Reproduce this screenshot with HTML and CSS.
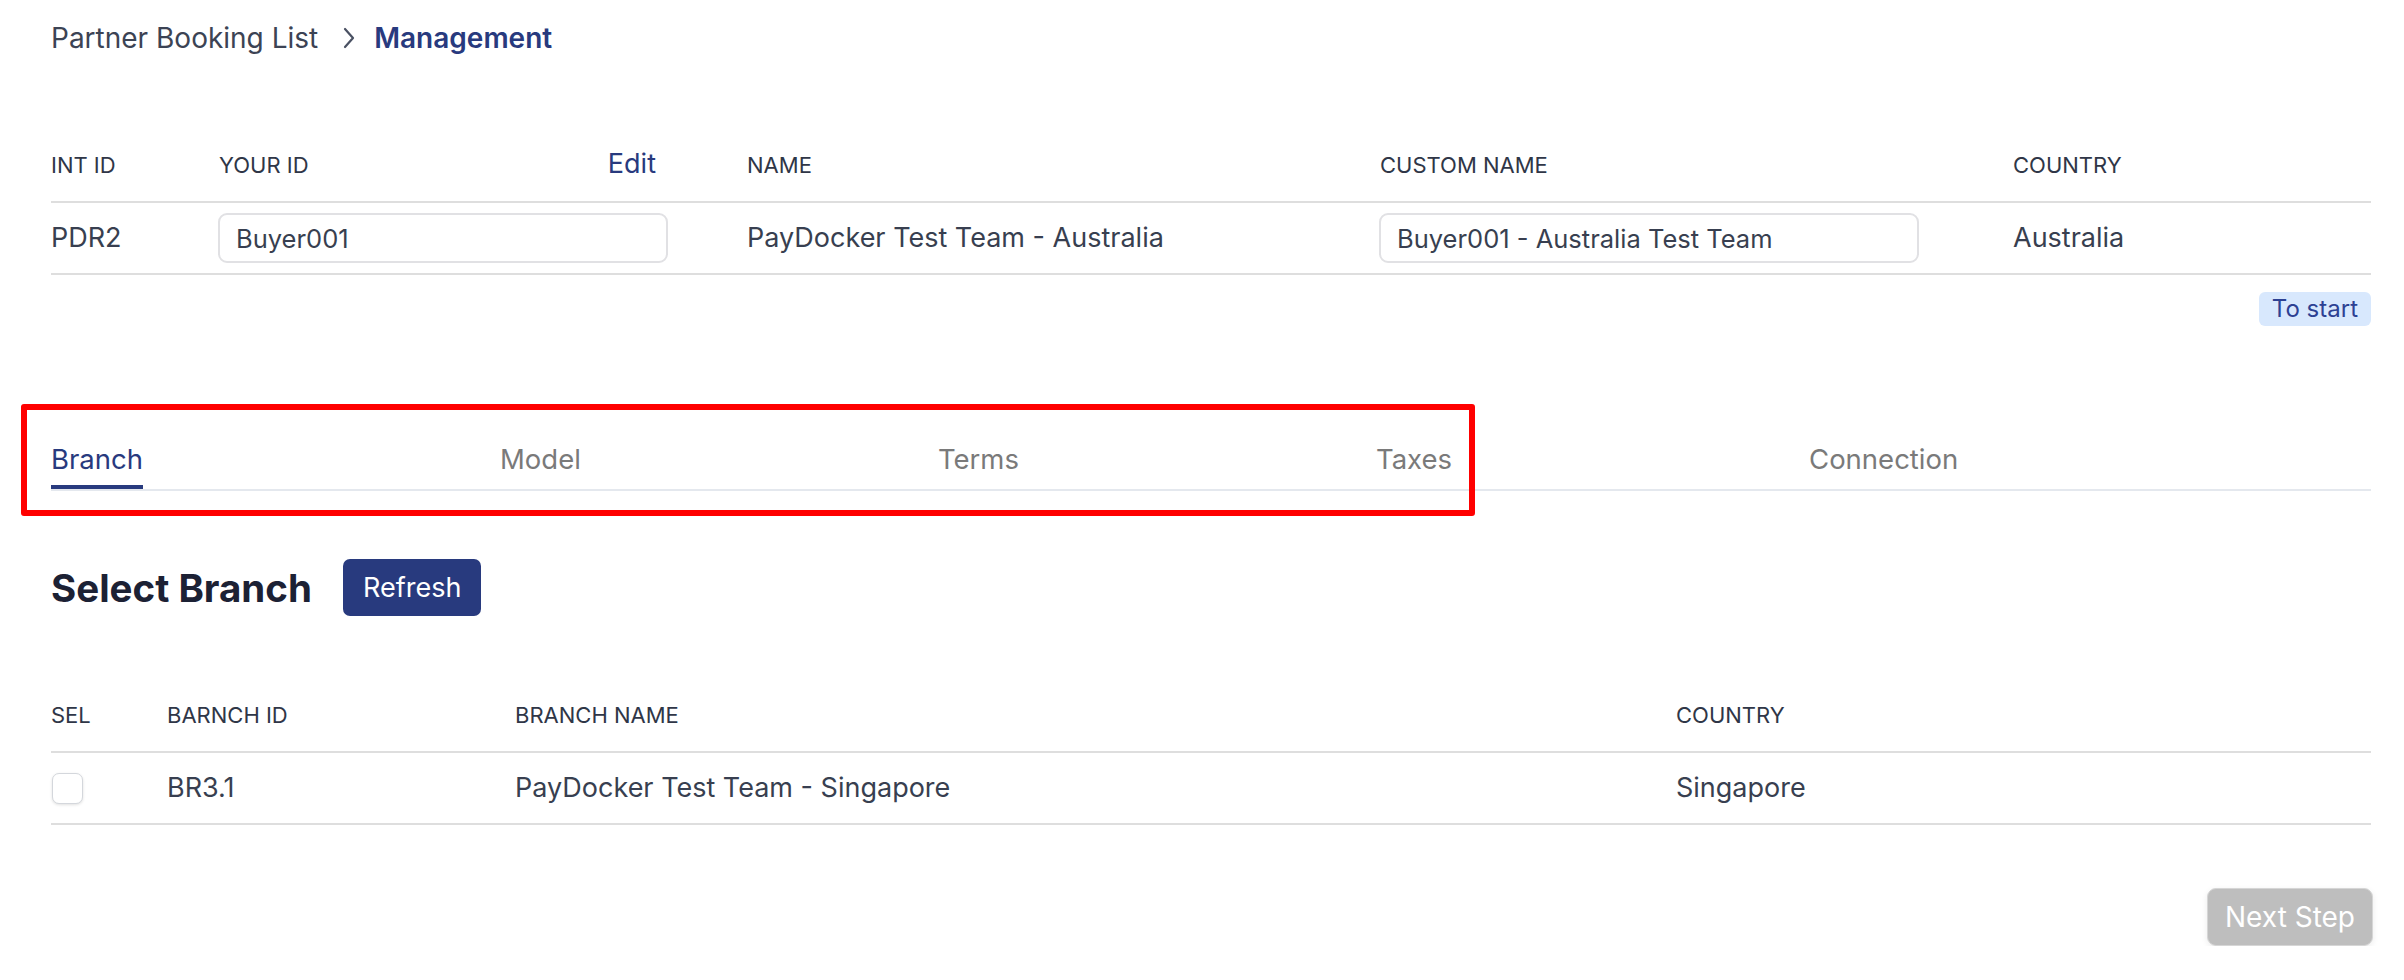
FILE: index.html
```html
<!DOCTYPE html>
<html lang="en">
<head>
  <meta charset="UTF-8" />
  <title>Management - Partner Booking</title>
  <meta name="viewport" content="width=device-width, initial-scale=1.0" />
  <link rel="stylesheet" href="styles.css">
</head>
<body>
<div class="page">

  <!-- Breadcrumb -->
  <nav class="crumbs">
    <span class="crumb">Partner Booking List</span>
    <svg class="crumb-sep" viewBox="0 0 14 22" width="14" height="22">
      <path d="M3 2l8 9-8 9" fill="none" stroke="#4a5163" stroke-width="2.2" stroke-linecap="round" stroke-linejoin="round"/>
    </svg>
    <span class="crumb current">Management</span>
  </nav>

  <!-- Partner info -->
  <table class="grid partner">
    <colgroup>
      <col class="c-int">
      <col class="c-your">
      <col class="c-name">
      <col class="c-custom">
      <col class="c-country">
    </colgroup>
    <thead>
      <tr>
        <th>Int ID</th>
        <th>
          <div class="th-split">
            <span>Your ID</span>
            <a class="edit" href="#">Edit</a>
          </div>
        </th>
        <th>Name</th>
        <th>Custom Name</th>
        <th>Country</th>
      </tr>
    </thead>
    <tbody>
      <tr>
        <td>PDR2</td>
        <td><input class="field field-id" type="text" value="Buyer001" /></td>
        <td>PayDocker Test Team - Australia</td>
        <td><input class="field field-custom" type="text" value="Buyer001 - Australia Test Team" /></td>
        <td>Australia</td>
      </tr>
    </tbody>
  </table>

  <div class="top-actions">
    <span class="tag">To start</span>
  </div>

  <!-- Tabs -->
  <div class="tabs">
    <div class="tab-list">
      <div class="tab active">Branch</div>
      <div class="tab">Model</div>
      <div class="tab">Terms</div>
      <div class="tab">Taxes</div>
      <div class="tab">Connection</div>
    </div>
    <div class="annot"></div>
  </div>

  <!-- Branch selection -->
  <div class="section-head">
    <h2>Select Branch</h2>
    <button class="btn-primary">Refresh</button>
  </div>

  <table class="grid branches">
    <colgroup>
      <col class="c-sel">
      <col class="c-bid">
      <col class="c-bname">
      <col class="c-bcountry">
    </colgroup>
    <thead>
      <tr>
        <th>Sel</th>
        <th>Barnch ID</th>
        <th>Branch Name</th>
        <th>Country</th>
      </tr>
    </thead>
    <tbody>
      <tr>
        <td><input class="check" type="checkbox" /></td>
        <td>BR3.1</td>
        <td>PayDocker Test Team - Singapore</td>
        <td>Singapore</td>
      </tr>
    </tbody>
  </table>

  <div class="footer">
    <button class="btn-next" disabled>Next Step</button>
  </div>

</div>
</body>
</html>
```

FILE: styles.css
```css
:root {
  --navy: #283a7e;
  --text: #383f50;
  --label: #2f3647;
  --line: #dedede;
  --muted: #7a7a7a;
}

* {
  box-sizing: border-box;
}

body {
  margin: 0;
  font-family: Inter, "Noto Sans", sans-serif;
  color: var(--text);
  background: #ffffff;
}

.page {
  padding: 20px 33px 0 51px;
}

/* Breadcrumb */
.crumbs {
  display: flex;
  align-items: center;
  height: 36px;
  font-size: 28px;
}

.crumb {
  color: #3c4354;
}

.crumb.current {
  color: var(--navy);
  font-weight: 600;
}

.crumb-sep {
  margin: 0 18px 0 24px;
}

/* Tables */
.grid {
  width: 100%;
  border-collapse: separate;
  border-spacing: 0;
  table-layout: fixed;
}

.grid th {
  text-align: left;
  font-weight: 400;
  font-size: 22px;
  line-height: 28px;
  color: var(--label);
  text-transform: uppercase;
  padding: 22px 0;
  border-bottom: 2px solid var(--line);
}

.grid td {
  font-size: 27px;
  line-height: 50px;
  padding: 10px 0;
  border-bottom: 2px solid var(--line);
  vertical-align: middle;
}

.partner {
  margin-top: 72px;
}

.c-int { width: 168px; }
.c-your { width: 528px; }
.c-name { width: 633px; }
.c-custom { width: 633px; }
.c-country { width: 358px; }

.th-split {
  display: flex;
  justify-content: space-between;
  align-items: baseline;
  width: 437px;
}

.edit {
  color: var(--navy);
  font-size: 27px;
  text-transform: none;
  text-decoration: none;
}

.field {
  display: block;
  height: 50px;
  padding: 0 16px;
  margin-left: -1px;
  border: 2px solid #e1e1e4;
  border-radius: 9px;
  font-family: inherit;
  font-size: 25.5px;
  color: var(--text);
  background: #ffffff;
}

.field-id {
  width: 450px;
}

.field-custom {
  width: 540px;
}

.top-actions {
  display: flex;
  justify-content: flex-end;
  margin-top: 17px;
}

.tag {
  height: 34px;
  line-height: 34px;
  padding: 0 13px;
  font-size: 24px;
  color: #2d4193;
  background: #d8e8fd;
  border-radius: 6px;
}

/* Tabs */
.tabs {
  position: relative;
  margin-top: 115px;
}

.tab-list {
  display: flex;
  gap: 357px;
  border-bottom: 2px solid #e4e8ee;
}

.tab {
  font-size: 27.5px;
  line-height: 36px;
  padding-bottom: 8px;
  color: var(--muted);
  border-bottom: 4px solid transparent;
}

.tab.active {
  color: var(--navy);
  border-bottom-color: var(--navy);
}

.annot {
  position: absolute;
  left: -30px;
  top: -37px;
  width: 1454px;
  height: 112px;
  border: 6px solid #ff0000;
  border-radius: 3px;
  pointer-events: none;
}

/* Branch section */
.section-head {
  display: flex;
  align-items: center;
  gap: 31px;
  margin-top: 68px;
}

.section-head h2 {
  margin: 0;
  font-size: 38.5px;
  font-weight: 700;
  color: #1c2134;
}

.btn-primary {
  height: 57px;
  padding: 0 20px;
  font-family: inherit;
  font-size: 27px;
  color: #ffffff;
  background: var(--navy);
  border: none;
  border-radius: 7px;
  cursor: pointer;
}

.branches {
  margin-top: 63px;
}

.c-sel { width: 116px; }
.c-bid { width: 348px; }
.c-bname { width: 1161px; }
.c-bcountry { width: 695px; }

.check {
  appearance: none;
  -webkit-appearance: none;
  display: block;
  width: 31px;
  height: 31px;
  margin: 0 0 0 1px;
  border: 1.5px solid #d4d7dc;
  border-radius: 7px;
  background: #ffffff;
  box-shadow: 0 1px 3px rgba(0, 0, 0, 0.12);
}

.footer {
  display: flex;
  justify-content: flex-end;
  margin: 63px -2px 0 0;
}

.btn-next {
  height: 58px;
  padding: 0 17px;
  font-family: inherit;
  font-size: 28px;
  color: #ffffff;
  background: #bebebe;
  border: 1.5px solid #d6d6d6;
  border-radius: 9px;
  box-shadow: 0 2px 6px rgba(0, 0, 0, 0.08);
}
```
